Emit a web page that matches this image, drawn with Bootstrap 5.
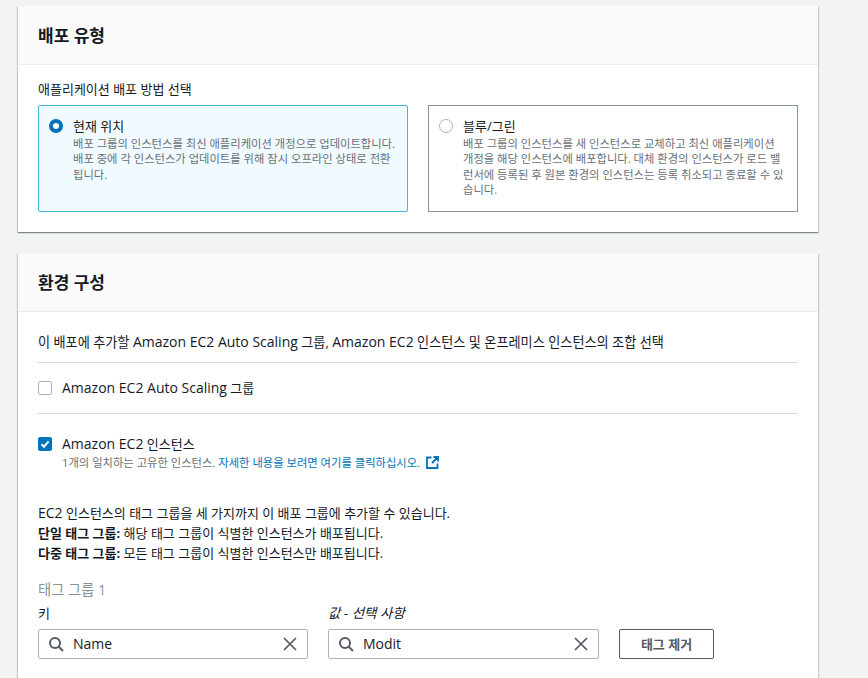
<!DOCTYPE html>
<html lang="ko"><head><meta charset="utf-8">
<link href="https://cdn.jsdelivr.net/npm/bootstrap@5.3.0/dist/css/bootstrap.min.css" rel="stylesheet">
<style>
html,body{height:678px;overflow:hidden}
body{background:#f2f3f3;font-family:"Open Sans","Noto Sans CJK KR",sans-serif;font-size:13px;line-height:20px;color:#16191f;padding:6px 50px 0 18px}
.pan{background:#fff;box-shadow:0 1px 1px 0 rgba(0,28,36,.3),1px 1px 1px 0 rgba(0,28,36,.15),-1px 1px 1px 0 rgba(0,28,36,.15);margin-bottom:21px}
.pan-h{background:#fafafa;border-bottom:1px solid #eaeded;height:59px;padding:19px 20px 0;font-size:17px;font-weight:700;line-height:22px}
.pan-b{padding:14px 20px 20px}
.pick{flex:1 1 0;height:107px;border:1px solid #879596;padding:10px 10px 0 10px;gap:10px}
.pick.on{background:#f1faff;border-color:#44b9d6;border-radius:2px}
.dot{width:14px;height:14px;flex:none;border-radius:50%;border:1px solid #aab7b8;margin-top:3px}
.dot.on{border:4px solid #0073bb;background:#fff}
.sub{font-size:11.3px;line-height:15.4px;color:#687078}
.rule{border-top:1px solid #d5dbdb}
.cbx{width:14px;height:14px;flex:none;border:1px solid #aab7b8;border-radius:2px;margin-top:3px}
.cbx.on{background:#0073bb;border-color:#0073bb;display:flex;align-items:center;justify-content:center}
.lnk{color:#0073bb;text-decoration:none}
.fld{height:30px;border:1px solid #aab7b8;border-radius:2px;padding:0 9px;gap:9px;background:#fff}
.ital{font-style:italic;font-size:13.5px}
.rm{width:95px;height:30px;border:1px solid #545b64;border-radius:2px;background:#fff;color:#545b64;font-weight:700;font-size:13px;padding:0;line-height:1}
.gray{color:#879596;font-size:14.3px;margin-top:17px}
.gap-s{margin-bottom:6px}
.intro{padding-bottom:10px;font-size:13.15px}
.ext{margin-left:6px;vertical-align:-2px}
.lab{margin-bottom:6px}
.lat{font-size:14px}
.sub1{margin-top:1px}
.tags{margin-top:3px;gap:20px}
.notes{margin-top:33px}
</style></head><body>
<section class="pan">
 <div class="pan-h">배포 유형</div>
 <div class="pan-b">
  <div class="gap-s">애플리케이션 배포 방법 선택</div>
  <div class="d-flex" style="gap:20px">
   <div class="pick on d-flex"><span class="dot on"></span><div><div>현재 위치</div><div class="sub">배포 그룹의 인스턴스를 최신 애플리케이션 개정으로 업데이트합니다. 배포 중에 각 인스턴스가 업데이트를 위해 잠시 오프라인 상태로 전환됩니다.</div></div></div>
   <div class="pick d-flex"><span class="dot"></span><div><div>블루/그린</div><div class="sub">배포 그룹의 인스턴스를 새 인스턴스로 교체하고 최신 애플리케이션 개정을 해당 인스턴스에 배포합니다. 대체 환경의 인스턴스가 로드 밸런서에 등록된 후 원본 환경의 인스턴스는 등록 취소되고 종료할 수 있습니다.</div></div></div>
  </div>
 </div>
</section>
<section class="pan">
 <div class="pan-h">환경 구성</div>
 <div class="pan-b" style="padding-top:20px">
  <div class="intro">이 배포에 추가할 <span class="lat">Amazon EC2 Auto Scaling</span> 그룹, <span class="lat">Amazon EC2</span> 인스턴스 및 온프레미스 인스턴스의 조합 선택</div>
  <div class="rule"></div>
  <div class="d-flex" style="gap:10px;padding:15px 0"><span class="cbx"></span><div><span class="lat">Amazon EC2 Auto Scaling</span> 그룹</div></div>
  <div class="rule"></div>
  <div class="d-flex" style="gap:10px;padding-top:20px"><span class="cbx on"><svg width="10" height="10" viewBox="0 0 10 10"><path d="M1.5 5.2 4 7.7 8.6 2.3" fill="none" stroke="#fff" stroke-width="2"/></svg></span>
   <div><div><span class="lat">Amazon EC2</span> 인스턴스</div><div class="sub sub1">1개의 일치하는 고유한 인스턴스. <a class="lnk" href="#">자세한 내용을 보려면 여기를 클릭하십시오.<svg class="ext" width="13" height="13" viewBox="0 0 13 13" fill="none" stroke="#0073bb" stroke-width="1.8"><path d="M5.5 1.5H1v10.5h10.5V7.5M7.5 1h4.5v4.5M12 1 6 7"/></svg></a></div></div></div>
  <div class="notes"><span class="lat">EC2</span> 인스턴스의 태그 그룹을 세 가지까지 이 배포 그룹에 추가할 수 있습니다.<br><b>단일 태그 그룹:</b> 해당 태그 그룹이 식별한 인스턴스가 배포됩니다.<br><b>다중 태그 그룹:</b> 모든 태그 그룹이 식별한 인스턴스만 배포됩니다.</div>
  <div class="gray">태그 그룹 1</div>
  <div class="d-flex align-items-end tags">
   <div style="width:270px"><div class="lab">키</div><div class="fld d-flex align-items-center"><svg width="16" height="16" viewBox="0 0 16 16" fill="none" stroke="#545b64" stroke-width="2"><circle cx="7" cy="7" r="5"/><path d="M10.5 10.5 15 15"/></svg><span class="flex-grow-1 lat">Name</span><svg width="16" height="16" viewBox="0 0 16 16" fill="none" stroke="#545b64" stroke-width="1.7"><path d="M2 2 14 14M14 2 2 14"/></svg></div></div>
   <div style="width:271px"><div class="ital lab">값 - 선택 사항</div><div class="fld d-flex align-items-center"><svg width="16" height="16" viewBox="0 0 16 16" fill="none" stroke="#545b64" stroke-width="2"><circle cx="7" cy="7" r="5"/><path d="M10.5 10.5 15 15"/></svg><span class="flex-grow-1 lat">Modit</span><svg width="16" height="16" viewBox="0 0 16 16" fill="none" stroke="#545b64" stroke-width="1.7"><path d="M2 2 14 14M14 2 2 14"/></svg></div></div>
   <button class="btn rm">태그 제거</button>
  </div>
 </div>
</section>
<script src="https://cdn.jsdelivr.net/npm/bootstrap@5.3.0/dist/js/bootstrap.bundle.min.js"></script>
</body></html>
